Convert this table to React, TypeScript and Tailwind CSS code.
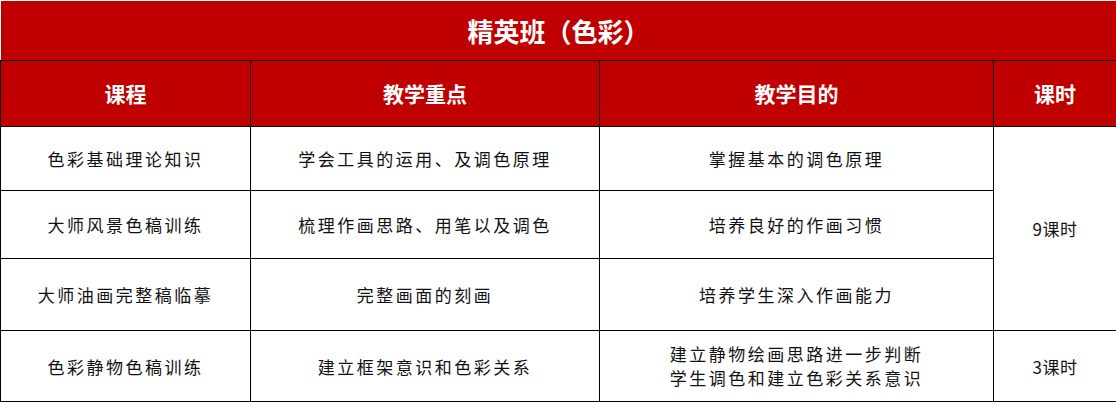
const rows = [
  { course: "色彩基础理论知识", focus: "学会工具的运用、及调色原理", goal: ["掌握基本的调色原理"], h: "h-[64px]" },
  { course: "大师风景色稿训练", focus: "梳理作画思路、用笔以及调色", goal: ["培养良好的作画习惯"], h: "h-[68px]" },
  { course: "大师油画完整稿临摹", focus: "完整画面的刻画", goal: ["培养学生深入作画能力"], h: "h-[72px]" },
  { course: "色彩静物色稿训练", focus: "建立框架意识和色彩关系", goal: ["建立静物绘画思路进一步判断", "学生调色和建立色彩关系意识"], h: "h-[71px]" },
];

const font = { fontFamily: '"Noto Sans CJK SC", "Noto Sans", sans-serif' };

export default function App() {
  return (
    <div className="w-[1116px] h-[403px] bg-white" style={font}>
      <table className="w-[1116px] table-fixed border-collapse">
        <colgroup>
          <col className="w-[250px]" />
          <col className="w-[349px]" />
          <col className="w-[394px]" />
          <col className="w-[123px]" />
        </colgroup>
        <thead>
          <tr className="h-[60px]">
            <th
              colSpan={4}
              className="bg-[#c00000] border-t border-l border-t-white border-l-white border-r border-r-black border-b border-b-black text-white text-[26px] font-bold leading-none"
            >
              精英班（色彩）
            </th>
          </tr>
          <tr className="h-[66px]">
            {["课程", "教学重点", "教学目的", "课时"].map((t) => (
              <th
                key={t}
                className="bg-[#c00000] border border-black text-white text-[21px] font-bold leading-none"
              >
                {t}
              </th>
            ))}
          </tr>
        </thead>
        <tbody>
          {rows.map((r, i) => (
            <tr key={r.course} className={r.h}>
              <td className="border border-black text-center text-[17px] tracking-[2.5px] text-[#111] leading-none">
                {r.course}
              </td>
              <td className="border border-black text-center text-[17px] tracking-[2.5px] text-[#111] leading-none">
                {r.focus}
              </td>
              <td className="border border-black text-center text-[17px] tracking-[2.5px] text-[#111] leading-[24px]">
                {r.goal.map((g) => (
                  <div key={g}>{g}</div>
                ))}
              </td>
              {i === 0 && (
                <td rowSpan={3} className="border border-black text-center text-[17px] tracking-[0.5px] text-[#111] leading-none">
                  9课时
                </td>
              )}
              {i === 3 && (
                <td className="border border-black text-center text-[17px] tracking-[0.5px] text-[#111] leading-none">
                  3课时
                </td>
              )}
            </tr>
          ))}
        </tbody>
      </table>
    </div>
  );
}
